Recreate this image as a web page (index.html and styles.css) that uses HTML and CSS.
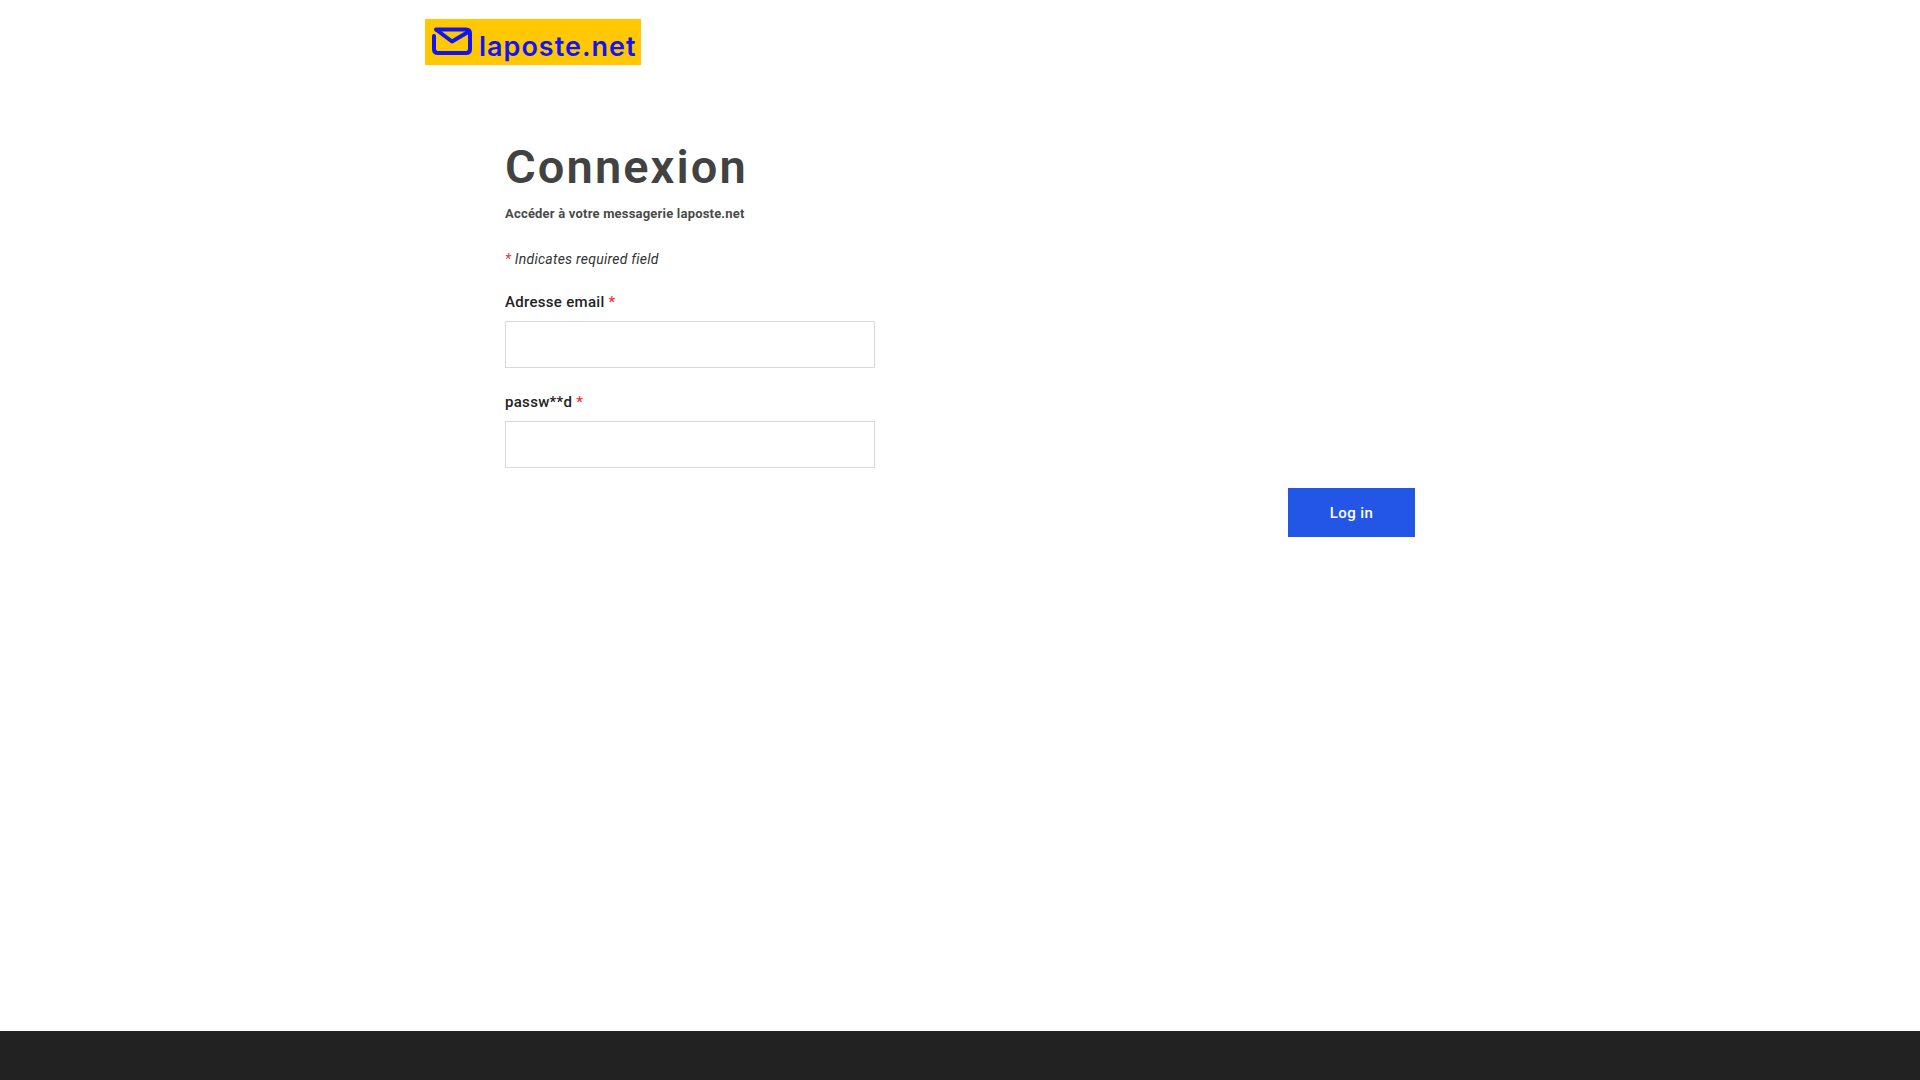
FILE: index.html
```html
<!DOCTYPE html>
<html lang="fr">
<head>
  <meta charset="UTF-8" />
  <meta name="viewport" content="width=device-width, initial-scale=1.0"/>
  <title>Connexion</title>
  <link rel="stylesheet" href="styles.css">
</head>
<body>
  <div class="page">
    <header class="site-header">
      <a class="logo" href="#">
        <svg class="logo-icon" viewBox="0 0 40 28" width="40" height="28" aria-hidden="true">
          <path d="M4 2.5 H34 Q38 2.5 38 6.5 V22 Q38 26 34 26 H6 Q2 26 2 22 V9" fill="none" stroke="#1414f0" stroke-width="4" stroke-linecap="round"/>
          <path d="M4 2.5 L20 14.5 L37 4.5" fill="none" stroke="#1414f0" stroke-width="4" stroke-linejoin="round"/>
        </svg>
        <span class="logo-text">laposte.net</span>
      </a>
    </header>

    <main class="content">
      <h1>Connexion</h1>
      <p class="subtitle">Accéder à votre messagerie laposte.net</p>
      <p class="required-note"><span class="star">*</span> Indicates required field</p>

      <form>
        <div class="field">
          <label for="email">Adresse email <span class="star">*</span></label>
          <input type="text" id="email" />
        </div>
        <div class="field">
          <label for="password">passw**d <span class="star">*</span></label>
          <input type="password" id="password" />
        </div>
        <div class="actions">
          <button type="button">Log in</button>
        </div>
      </form>
    </main>

    <footer class="site-footer"></footer>
  </div>
</body>
</html>
```

FILE: styles.css
```css
body {
  margin: 0;
  font-family: "Roboto", "Liberation Sans", sans-serif;
  background: #fff;
  color: #3d3d3d;
}

.page {
  min-height: 100vh;
  display: flex;
  flex-direction: column;
}

.site-header {
  width: 1070px;
  margin: 0 auto;
  padding-top: 19px;
}

.logo {
  width: 216px;
  height: 46px;
  box-sizing: border-box;
  padding: 8px 0 0 7px;
  display: flex;
  align-items: flex-start;
  gap: 7px;
  background: #ffc800;
  text-decoration: none;
}

.logo-icon {
  flex: none;
}

.logo-text {
  font-family: "Inter", sans-serif;
  font-size: 27px;
  font-weight: 600;
  line-height: 40px;
  letter-spacing: 1px;
  color: #1414f0;
  white-space: nowrap;
}

.content {
  width: 910px;
  margin: 0 auto;
  padding-top: 73px;
}

h1 {
  margin: 0;
  font-size: 47px;
  font-weight: 600;
  line-height: 58px;
  letter-spacing: 2.1px;
  color: #424242;
}

.subtitle {
  margin: 9px 0 0;
  font-size: 13px;
  font-weight: 700;
  line-height: 18px;
  letter-spacing: 0.2px;
  color: #4a4a4a;
}

.required-note {
  margin: 27px 0 0;
  font-size: 14px;
  font-style: italic;
  line-height: 18px;
  letter-spacing: 0.25px;
  color: #333;
}

.star {
  color: #ee3333;
}

.field {
  margin-top: 25px;
}

label {
  display: block;
  font-size: 15px;
  font-weight: 500;
  line-height: 18px;
  letter-spacing: 0.3px;
  color: #222;
}

input {
  display: block;
  width: 370px;
  height: 47px;
  box-sizing: border-box;
  margin-top: 10px;
  border: 1px solid #d9d9d9;
  background: #fff;
}

.actions {
  display: flex;
  justify-content: flex-end;
  margin-top: 20px;
}

button {
  width: 127px;
  height: 49px;
  border: none;
  background: #2356e6;
  color: #fff;
  font-family: inherit;
  font-size: 15px;
  font-weight: 500;
  letter-spacing: 0.4px;
}

.site-footer {
  margin-top: auto;
  height: 49px;
  background: #222;
}
```
